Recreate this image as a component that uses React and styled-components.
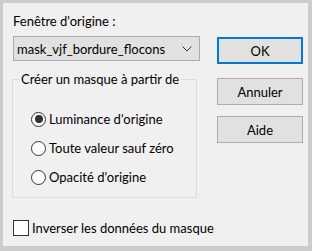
import styled, { createGlobalStyle } from "styled-components";

const Global = createGlobalStyle`
  html, body {
    margin: 0;
    padding: 0;
    background: #cccccc;
  }
  body {
    font-family: Lato, "Noto Sans", sans-serif;
    font-size: 13px;
    color: #000;
  }
`;

const Dialog = styled.div`
  margin: 3px 4px 0 3px;
  width: 305px;
  height: 243px;
  box-sizing: border-box;
  background: #f0f0f0;
  display: flex;
  padding: 10px 0 0 9px;
  white-space: nowrap;
`;

const LeftCol = styled.div`
  width: 188px;
  display: flex;
  flex-direction: column;
`;

const RightCol = styled.div`
  margin-left: 17px;
  padding-top: 24px;
  display: flex;
  flex-direction: column;
`;

const Label = styled.div`
  line-height: 16px;
  margin-left: 1px;
`;

const Combo = styled.div`
  margin: 7px 0 0 1px;
  width: 187px;
  height: 25px;
  box-sizing: border-box;
  border: 1px solid #adadad;
  background: #e1e1e1;
  display: flex;
  align-items: center;
  padding: 0 7px 0 3px;
  justify-content: space-between;
`;

const Group = styled.fieldset`
  margin: 10px 0 0 0;
  padding: 0;
  width: 185px;
  height: 127px;
  box-sizing: border-box;
  border: 1px solid #dcdcdc;
  min-width: 0;
  display: flex;
  flex-direction: column;
`;

const Legend = styled.legend`
  margin-left: 6px;
  padding: 0 2px;
  line-height: 16px;
`;

const Options = styled.div`
  padding: 24px 0 0 18px;
  display: flex;
  flex-direction: column;
  gap: 13px;
`;

const Row = styled.label`
  display: flex;
  align-items: center;
  gap: 3px;
  line-height: 16px;
`;

const Radio = styled.span`
  flex-shrink: 0;
  width: 15px;
  height: 15px;
  box-sizing: border-box;
  border-radius: 50%;
  border: 1px solid #333;
  background: #fff;
  display: flex;
  align-items: center;
  justify-content: center;
  &::after {
    content: "";
    width: 8px;
    height: 8px;
    border-radius: 50%;
    background: ${(p) => (p.$on ? "#333" : "transparent")};
  }
`;

const CheckRow = styled(Row)`
  margin: 22px 0 0 1px;
  width: 280px;
`;

const Box = styled.span`
  flex-shrink: 0;
  width: 16px;
  height: 16px;
  box-sizing: border-box;
  border: 1px solid #333;
  background: #fff;
`;

const Button = styled.div`
  margin-top: ${(p) => p.$top || 0}px;
  width: 86px;
  height: 27px;
  box-sizing: border-box;
  background: #e1e1e1;
  border: ${(p) => (p.$default ? "2px solid #0078d7" : "1px solid #adadad")};
  display: flex;
  align-items: center;
  justify-content: center;
`;

const Chevron = () => (
  <svg width="10" height="6" viewBox="0 0 10 6">
    <path d="M0.5 0.5 L5 5 L9.5 0.5" fill="none" stroke="#333" strokeWidth="1" />
  </svg>
);

export default function App() {
  return (
    <>
      <Global />
      <Dialog>
        <LeftCol>
          <Label>Fenêtre d'origine :</Label>
          <Combo>
            <span>mask_vjf_bordure_flocons</span>
            <Chevron />
          </Combo>
          <Group>
            <Legend>Créer un masque à partir de</Legend>
            <Options>
              <Row>
                <Radio $on />
                Luminance d'origine
              </Row>
              <Row>
                <Radio />
                Toute valeur sauf zéro
              </Row>
              <Row>
                <Radio />
                Opacité d'origine
              </Row>
            </Options>
          </Group>
          <CheckRow>
            <Box />
            Inverser les données du masque
          </CheckRow>
        </LeftCol>
        <RightCol>
          <Button $default>OK</Button>
          <Button $top={14}>Annuler</Button>
          <Button $top={11}>Aide</Button>
        </RightCol>
      </Dialog>
    </>
  );
}
